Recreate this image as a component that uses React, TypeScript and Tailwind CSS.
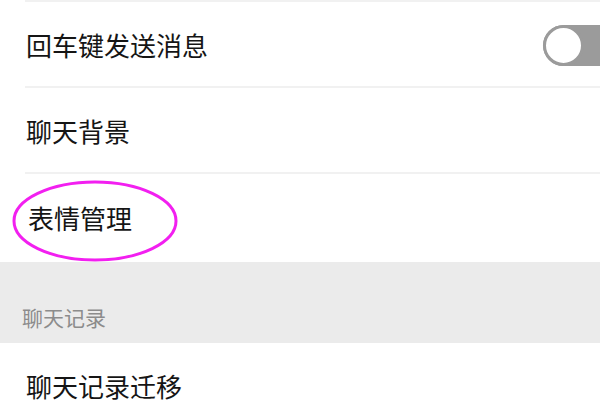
const font = { fontFamily: '"Noto Sans CJK SC", "Noto Sans", sans-serif' };

function Row({ label, children, border = true }: { label: string; children?: React.ReactNode; border?: boolean }) {
  return (
    <div className="relative flex h-[86px] items-center pl-[26px]">
      <span className="text-[26px] leading-none text-[#151515]">{label}</span>
      <div className="ml-auto">{children}</div>
      {border && <div className="absolute bottom-0 left-[25px] right-0 h-[2px] bg-[#f1f1f1]" />}
    </div>
  );
}

function Toggle() {
  return (
    <div className="relative flex h-[41px] w-[80px] translate-x-[23px] items-center rounded-full bg-[#9b9b9b]">
      <div className="h-[41px] w-[41px] rounded-full border-[3px] border-[#9b9b9b] bg-white" />
    </div>
  );
}

export default function App() {
  return (
    <div className="h-[400px] w-[600px] overflow-hidden bg-white" style={font}>
      <div className="ml-[25px] h-[2px] bg-[#f1f1f1]" />
      <Row label="回车键发送消息">
        <Toggle />
      </Row>
      <Row label="聊天背景" />
      <div className="relative">
        <div className="flex h-[88px] items-center pl-[28px]">
          <span className="text-[26px] leading-none text-[#151515]">表情管理</span>
        </div>
        <svg className="absolute left-0 top-0" width="200" height="100" viewBox="0 0 200 100">
          <ellipse cx="95" cy="47" rx="81" ry="39" fill="none" stroke="#f21ff0" strokeWidth="3" />
        </svg>
      </div>
      <div className="flex h-[81px] items-end bg-[#ebebeb] pb-[15px] pl-[22px]">
        <span className="text-[21px] leading-none text-[#8c8c8c]">聊天记录</span>
      </div>
      <Row label="聊天记录迁移" border={false} />
    </div>
  );
}
